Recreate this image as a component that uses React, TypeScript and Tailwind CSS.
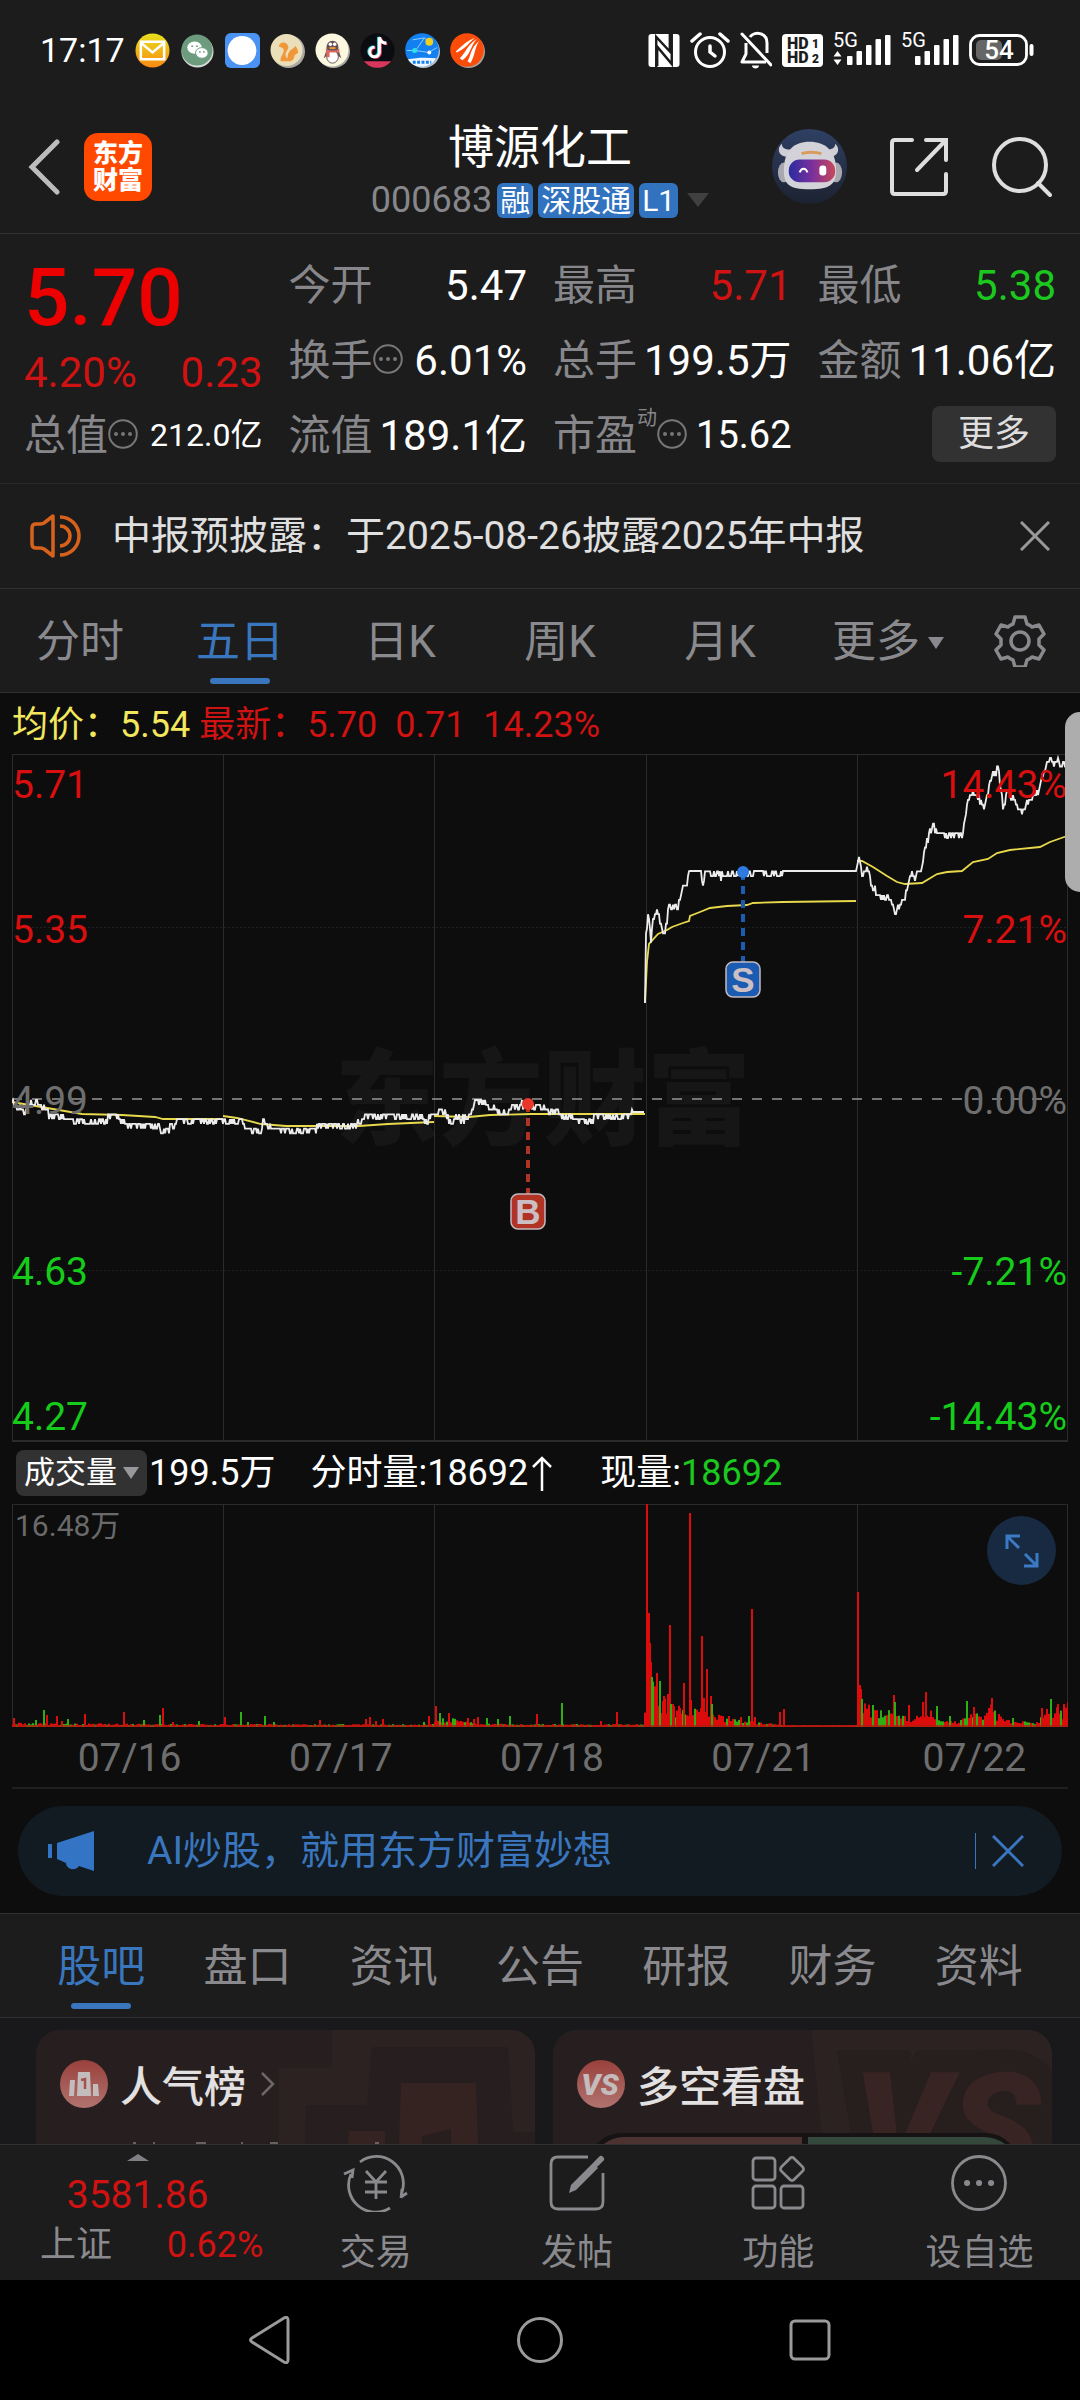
import type { ReactNode } from "react";

type Point = [number, number];
type Bar = { x: number; h: number; up: boolean };

const CHART_W = 1056;
const CHART_H = 686;
const VOLUME_H = 223;
const DAY_W = CHART_W / 5;
const TICK = CHART_H / 144; // one cent

const days = ["07/16", "07/17", "07/18", "07/21", "07/22"];

// Turning points of the price line, one list per unbroken run
const priceRuns: Point[][] = [
  [
    [0, 347], [10, 356], [19, 349], [29, 351], [39, 361], [53, 362], [64, 367], [94, 365], [104, 359],
    [115, 370], [143, 371], [151, 377], [170, 366], [211, 365], [227, 366], [233, 371], [241, 377],
    [249, 376], [252, 366], [257, 372], [270, 375], [302, 376], [308, 370], [343, 371], [353, 361],
    [410, 362], [415, 368], [421, 359], [427, 356], [433, 359], [437, 365], [457, 363], [463, 347],
    [472, 346], [478, 353], [496, 360], [500, 350], [527, 351], [533, 355], [547, 356], [551, 361],
    [576, 366], [588, 361], [612, 362], [620, 357], [632, 357],
  ],
  [
    [633, 248], [634, 184], [636, 159], [639, 184], [641, 161], [646, 156], [651, 180], [655, 168],
    [657, 146], [660, 153], [666, 150], [671, 132], [675, 130], [677, 116], [689, 116], [691, 134],
    [693, 117], [703, 119], [713, 122], [720, 118], [740, 119], [741, 116], [751, 116], [752, 118],
    [769, 119], [770, 116], [844, 116], [845, 110], [847, 104], [850, 119], [855, 114], [861, 132],
    [868, 141], [876, 142], [883, 158], [890, 144], [892, 147], [895, 131], [900, 118], [903, 123],
    [910, 112], [915, 85], [921, 70], [925, 78], [935, 80], [950, 79], [955, 53], [959, 38], [968, 46],
    [973, 53], [978, 26], [986, 13], [988, 30], [991, 52], [996, 35], [1003, 48], [1009, 57],
    [1015, 48], [1026, 37], [1035, 12], [1037, 3], [1043, 8], [1046, 4], [1050, 13], [1055, 7],
  ],
];

const averageRuns: Point[][] = [
  [[0, 347], [41, 354], [70, 359], [110, 360], [143, 362], [151, 364], [211, 364]],
  [[211, 361], [225, 363], [249, 369], [274, 371], [347, 371], [376, 369], [422, 367]],
  [[422, 361], [457, 362], [478, 360], [519, 359], [633, 359]],
  [
    [633, 248], [635, 207], [637, 189], [646, 179], [655, 175], [660, 172], [671, 168], [677, 166],
    [678, 161], [688, 157], [698, 153], [715, 151], [735, 150], [741, 148], [771, 147], [844, 146],
  ],
  [
    [845, 106], [850, 106], [861, 112], [875, 121], [885, 127], [893, 129], [910, 128], [925, 119],
    [935, 117], [950, 116], [961, 107], [976, 104], [985, 98], [998, 95], [1028, 92], [1038, 87],
    [1055, 81],
  ],
];

const volumeBase: Point[] = [
  [0, 4], [12, 3], [211, 2], [420, 2], [424, 8], [440, 8], [460, 4], [500, 2], [630, 2], [634, 55],
  [645, 38], [660, 25], [690, 21], [710, 10], [740, 5], [775, 1], [844, 1], [848, 32], [860, 20],
  [885, 19], [900, 8], [915, 21], [930, 9], [945, 5], [958, 20], [970, 7], [979, 24], [985, 13],
  [1000, 6], [1025, 4], [1035, 20], [1056, 19],
];

const upSpikes: Point[] = [
  [1, 9], [34, 12], [44, 11], [49, 6], [72, 13], [111, 15], [150, 19], [160, 5], [212, 10], [307, 7],
  [353, 8], [357, 10], [363, 6], [370, 8], [416, 11], [423, 21], [436, 14], [455, 9], [461, 8],
  [465, 10], [524, 13], [588, 6], [604, 15], [634, 223], [636, 114], [637, 84], [638, 65], [642, 38],
  [644, 54], [651, 31], [655, 33], [657, 102], [661, 21], [667, 19], [671, 44], [677, 214], [678, 27],
  [689, 91], [691, 29], [694, 58], [698, 31], [716, 11], [728, 10], [739, 118], [742, 10], [767, 15],
  [771, 18], [845, 135], [847, 42], [848, 38], [852, 20], [881, 32], [896, 22], [910, 25], [913, 35],
  [961, 20], [976, 19], [979, 29], [1029, 19], [1045, 23], [1051, 23], [1055, 25],
];

const downSpikes: Point[] = [
  [23, 7], [31, 17], [55, 8], [131, 7], [147, 12], [186, 6], [228, 15], [235, 5], [252, 11], [261, 5],
  [411, 5], [427, 14], [474, 9], [485, 8], [497, 11], [549, 24], [639, 50], [647, 46], [658, 23],
  [699, 23], [736, 11], [849, 28], [860, 22], [882, 25], [924, 21], [937, 11], [954, 26], [1000, 9],
  [1038, 28],
];

const seeded = (seed: number) => () => {
  seed = (seed * 16807) % 2147483647;
  return seed / 2147483647;
};

const valueAt = (points: Point[], x: number) => {
  for (let i = 1; i < points.length; i++) {
    const [x0, y0] = points[i - 1];
    const [x1, y1] = points[i];
    if (x <= x1) return { y: y0 + ((y1 - y0) * (x - x0)) / (x1 - x0), flat: y0 === y1 };
  }
  return { y: points[points.length - 1][1], flat: true };
};

const toPath = (points: Point[]) => "M" + points.map(([x, y]) => `${x} ${y.toFixed(1)}`).join("L");

const pricePath = priceRuns
  .map((run, i) => {
    const rand = seeded(71 + i);
    const out: Point[] = [run[0]];
    for (let x = run[0][0] + 1; x < run[run.length - 1][0]; x += 1) {
      const { y, flat } = valueAt(run, x);
      const noisy = flat ? y : y + (rand() - 0.5) * 7;
      out.push([x, flat ? y : Math.max(3, 2 + Math.round((noisy - 2) / TICK) * TICK)]);
    }
    out.push(run[run.length - 1]);
    return toPath(out);
  })
  .join("");

const averagePath = averageRuns.map(toPath).join("");

const volumeBars: Bar[] = (() => {
  const rand = seeded(19);
  const bars: Bar[] = [];
  for (let x = 0; x < CHART_W; x += 2) {
    const { y } = valueAt(volumeBase, x);
    const calm = x > 775 && x < 843;
    bars.push({ x, h: 1 + y * (0.35 + rand() * 0.65), up: calm || rand() > 0.3 });
  }
  upSpikes.forEach(([x, h]) => bars.push({ x, h, up: true }));
  downSpikes.forEach(([x, h]) => bars.push({ x, h, up: false }));
  return bars;
})();

const priceLabels = [
  { y: 43, price: "5.71", change: "14.43%", fill: "#d80f0f" },
  { y: 188, price: "5.35", change: "7.21%", fill: "#d80f0f" },
  { y: 359, price: "4.99", change: "0.00%", fill: "#6e6e6e" },
  { y: 530, price: "4.63", change: "-7.21%", fill: "#16cc1a" },
  { y: 675, price: "4.27", change: "-14.43%", fill: "#16cc1a" },
];

const MoreDots = () => (
  <svg viewBox="0 0 30 30" className="mb-1 size-[30px] shrink-0" fill="none" aria-hidden="true">
    <circle cx="15" cy="15" r="13.8" stroke="#77777a" strokeWidth="2" />
    <g fill="#77777a">
      <circle cx="8" cy="15" r="2" />
      <circle cx="15" cy="15" r="2" />
      <circle cx="22" cy="15" r="2" />
    </g>
  </svg>
);

const Signal = ({ data }: { data?: boolean }) => (
  <svg viewBox="0 -6 58 48" className="h-[48px] w-[58px]" fill="#fff" aria-hidden="true">
    <text x="0" y="15" fontSize="20" fontFamily="Roboto">
      5G
    </text>
    {data && <path d="M4.500 19l4 5.500h-8zM4.500 33l4-5.500h-8z" />}
    <rect x="14" y="24" width="5.500" height="9" rx="1" />
    <rect x="23.500" y="19" width="5.500" height="14" rx="1" />
    <rect x="33" y="13" width="5.500" height="20" rx="1" />
    <rect x="42.500" y="7" width="5.500" height="26" rx="1" />
    <rect x="52" y="3" width="5.500" height="30" rx="1" />
  </svg>
);

const AppIcon = ({ children }: { children: ReactNode }) => (
  <svg viewBox="0 0 36 36" className="size-[35px]" aria-hidden="true">
    {children}
  </svg>
);

const StatusBar = () => (
  <div className="flex items-center justify-between pt-[26px] pr-[46px] pb-[30px] pl-10">
    <div className="flex items-center gap-[10px]">
      <span className="text-[34px] leading-10 text-white">17:17</span>
      <AppIcon>
        <defs>
          <linearGradient id="mail" x1="0" y1="0" x2="0" y2="1">
            <stop offset="0" stopColor="#e6e01c" />
            <stop offset="1" stopColor="#fb8a12" />
          </linearGradient>
        </defs>
        <circle cx="18" cy="18" r="17.500" fill="url(#mail)" />
        <path d="M6 9h24v18H6zM6 10l12 10 12-10" fill="none" stroke="#fff" strokeWidth="2.600" />
      </AppIcon>
      <AppIcon>
        <circle cx="18" cy="19" r="16.500" fill="#d7ddd8" />
        <circle cx="17.500" cy="17.500" r="16" fill="#6c9c7d" />
        <ellipse cx="15" cy="15" rx="7.500" ry="6.300" fill="#fff" />
        <ellipse cx="22.500" cy="20.500" rx="6.500" ry="5.500" fill="#fff" stroke="#6c9c7d" />
        <g fill="#6c9c7d">
          <circle cx="12.500" cy="13.500" r="1" />
          <circle cx="17.500" cy="13.500" r="1" />
          <circle cx="20.500" cy="19.500" r=".9" />
          <circle cx="24.500" cy="19.500" r=".9" />
        </g>
      </AppIcon>
      <AppIcon>
        <rect width="36" height="36" rx="6" fill="#4b93f3" />
        <circle cx="17.500" cy="18" r="14.800" fill="#fff" />
      </AppIcon>
      <AppIcon>
        <circle cx="19" cy="19" r="17" fill="#aaa9a5" />
        <circle cx="17" cy="17.500" r="16.500" fill="#eadfb8" />
        <path
          d="M9 14c0-4 6-6 9-2 3 4-2 6-2 10 0 3 2 5 6 5v2H11c-1-5 4-8 3-12-1-2-3-2-5-3zM20 19c2-3 5-3 6-6l2 3 1 4c-2 2-4 2-4 4 0 3-2 5-5 5-3-3-2-7 0-10z"
          fill="#f0973a"
        />
      </AppIcon>
      <AppIcon>
        <circle cx="19" cy="19" r="17" fill="#aaa9a5" />
        <circle cx="17.500" cy="17.500" r="17" fill="#fbf8df" />
        <path d="M12 17c-2-12 14-12 12 0l3 9-4-3H13l-4 3z" fill="#6a5358" />
        <ellipse cx="18" cy="24.500" rx="6" ry="6.500" fill="#fff" stroke="#6a5358" />
        <circle cx="15.800" cy="11.500" r="1.800" fill="#fff" />
        <circle cx="20.200" cy="11.500" r="1.800" fill="#fff" />
        <path d="M11 16c4 3 10 3 14 0v4H15v5h-3z" fill="#dd6a62" />
        <path d="M15 15.500h6" stroke="#f0973a" strokeWidth="2" />
      </AppIcon>
      <AppIcon>
        <circle cx="18" cy="18" r="17.500" fill="#0b0b12" />
        <path d="M4 29h28c-7 9-21 9-28 0z" fill="#d9365e" />
        <path d="M14 14a5 5 0 1 0 5 5V4c1 4 4 6 8 6" fill="none" stroke="#25d8dc" strokeWidth="3" />
        <path d="M16 15a5 5 0 1 0 5 5V5c1 4 4 6 7 6" fill="none" stroke="#f03a5d" strokeWidth="3" />
        <path d="M15 14.500a5 5 0 1 0 5 5V4.500c1 4 4 6 7 6" fill="none" stroke="#fff" strokeWidth="3" />
      </AppIcon>
      <AppIcon>
        <circle cx="19" cy="19" r="17" fill="#b9c2cc" />
        <circle cx="17.500" cy="17.500" r="17.300" fill="#1380f2" />
        <path d="M2 18l9 0 13 2 9-5M11 18l9-13 5 5M8 7l12-2" fill="none" stroke="#8fd0ff" />
        <circle cx="25" cy="9" r="4" fill="#efcf1c" />
        <circle cx="10" cy="18" r="2.600" fill="#2fe0e8" />
        <circle cx="25" cy="20" r="2" fill="#fff" />
        <path d="M3 27c9-2 20-2 29-1-5 11-23 12-29 1z" fill="#eef6ff" />
        <path d="M8 30h19" stroke="#1380f2" strokeWidth="3" strokeDasharray="3 1.500" />
      </AppIcon>
      <AppIcon>
        <circle cx="19" cy="19" r="17" fill="#a7a3a0" />
        <circle cx="17.500" cy="17.500" r="17.300" fill="#fb4c0a" />
        <path
          d="M6 19C12 14 17 8 26 5c-7 5-9 11-19 15zM10 26c6-5 7-13 18-20-7 7-6 15-15 22zM18 29c4-6 2-12 12-21-5 8-4 15-9 23z"
          fill="#fff"
        />
      </AppIcon>
    </div>
    <div className="flex items-center gap-[10px]">
      <svg viewBox="0 0 32 34" className="h-[33px] w-[32px]" aria-hidden="true">
        <rect width="32" height="34" rx="3" fill="#fff" />
        <path d="M8 34V3l14 15V0M24 0v31L9 13v20" fill="none" stroke="#1c1c1c" strokeWidth="2.500" />
      </svg>
      <svg viewBox="0 0 40 38" className="h-[38px] w-[40px]" fill="none" stroke="#fff" aria-hidden="true">
        <circle cx="20" cy="21" r="14.500" strokeWidth="3" />
        <path d="M2 10l8-7M38 10l-8-7" strokeWidth="3.500" strokeLinecap="round" />
        <path d="M20 15v6l5 4" strokeWidth="3.500" strokeLinecap="round" />
      </svg>
      <svg viewBox="0 0 32 38" className="h-[38px] w-[32px]" fill="none" stroke="#fff" aria-hidden="true">
        <path d="M2 3l29 31" strokeWidth="3" strokeLinecap="round" />
        <path d="M6 12v11l-4 8h24M10 6c4-6 17-5 17 6v10" strokeWidth="3" strokeLinejoin="round" />
        <path d="M12 34.500h7c0 4-7 4-7 0z" fill="#fff" stroke="none" />
      </svg>
      <svg viewBox="0 0 41 33" className="h-[33px] w-[41px]" aria-hidden="true">
        <rect width="41" height="33" rx="4" fill="#fff" />
        <g fill="#1c1c1c" fontSize="16" fontWeight="900" fontFamily="Roboto">
          <text x="5" y="15">HD</text>
          <text x="5" y="29">HD</text>
          <g fontSize="12">
            <text x="30" y="14">1</text>
            <text x="30" y="29">2</text>
          </g>
        </g>
      </svg>
      <Signal data />
      <Signal />
      <svg viewBox="0 0 65 32" className="h-[32px] w-[65px]" aria-hidden="true">
        <rect x="1.500" y="1.500" width="56" height="29" rx="9" fill="none" stroke="#fff" strokeWidth="2.800" />
        <rect x="7" y="6" width="26" height="20" rx="5" fill="#666" />
        <rect x="60.500" y="10" width="4" height="12" rx="2" fill="#fff" />
        <text x="30" y="25" fontSize="26" fontWeight="500" fontFamily="Roboto" fill="#fff" textAnchor="middle">
          54
        </text>
      </svg>
    </div>
  </div>
);

const Header = () => (
  <header className="grid grid-cols-[1fr_auto_1fr] items-center border-b border-[#303030] px-[28px] pt-[9px] pb-[13px]">
    <div className="flex items-center gap-6">
      <button aria-label="返回">
        <svg viewBox="0 0 32 56" className="h-14 w-8" fill="none" stroke="#bcbcbc" strokeWidth="5">
          <path d="M29 3L4 28l25 25" strokeLinecap="round" />
        </svg>
      </button>
      <a
        href="#home"
        className="rounded-[14px] bg-[#ff4800] px-[9px] py-[7px] text-[25px] leading-[27px] font-black text-white"
      >
        东方
        <br />
        财富
      </a>
    </div>
    <div className="flex flex-col items-center gap-[5px] pt-[6px]">
      <h1 className="text-[46px] leading-[56px] text-white">博源化工</h1>
      <div className="flex items-center gap-[5px] text-[36px] leading-10 text-[#87878b]">
        <span>000683</span>
        <span className="rounded-md bg-[#3273bf] px-[3px] text-[30px] leading-[35px] text-white">融</span>
        <span className="rounded-md bg-[#3273bf] px-[3px] text-[30px] leading-[35px] text-white">深股通</span>
        <span className="rounded-md bg-[#3273bf] px-[3px] text-[30px] leading-[35px] text-white">L1</span>
        <svg viewBox="0 0 22 14" className="ml-1 h-[14px] w-[22px]" fill="#404040" aria-hidden="true">
          <path d="M0 0h22L11 14z" />
        </svg>
      </div>
    </div>
    <div className="flex items-center justify-end gap-[43px]">
      <button aria-label="妙想助手">
        <svg viewBox="0 0 76 76" className="size-[75px]">
          <defs>
            <linearGradient id="sky" x1="0" y1="0" x2="0" y2="1">
              <stop offset="0" stopColor="#2f4064" />
              <stop offset="1" stopColor="#1c2230" />
            </linearGradient>
            <linearGradient id="visor">
              <stop offset="0" stopColor="#2a2ca0" />
              <stop offset=".5" stopColor="#7a2f9c" />
              <stop offset="1" stopColor="#c8485a" />
            </linearGradient>
          </defs>
          <circle cx="38" cy="38" r="38" fill="url(#sky)" />
          <path d="M14 28c-8-1-9-9-4-13 0 5 4 6 10 6zM60 28c8-1 9-9 4-13 0 5-4 6-10 6z" fill="#cfced4" />
          <ellipse cx="12" cy="44" rx="6" ry="10" fill="#a9a8b0" />
          <ellipse cx="65" cy="44" rx="6" ry="10" fill="#a9a8b0" />
          <path d="M12 42c0-20 10-29 26-29s27 9 27 29c0 14-6 19-27 19s-26-5-26-19z" fill="#d3d2d8" />
          <rect x="17" y="31" width="47" height="23" rx="11" fill="url(#visor)" />
          <path d="M30 25c5-2 14-2 20 0" stroke="#d99a5c" strokeWidth="3" fill="none" />
          <path d="M28 44c2-5 6-5 8 0" stroke="#fff" strokeWidth="2" fill="none" />
          <rect x="48" y="37" width="7" height="10" rx="3" fill="#fff" />
        </svg>
      </button>
      <button aria-label="分享">
        <svg viewBox="0 0 59 60" className="h-[60px] w-[59px]" fill="none" stroke="#dedede" strokeWidth="4">
          <path d="M22 3H5q-3 0-3 3v48q0 3 3 3h48q3 0 3-3V37M36 3h20v20M55 4L27 33" strokeLinecap="round" />
        </svg>
      </button>
      <button aria-label="搜索">
        <svg viewBox="0 0 60 60" className="size-[60px]" fill="none" stroke="#dedede" strokeWidth="4">
          <circle cx="28" cy="28" r="26" />
          <path d="M46 46l12 12" strokeLinecap="round" />
        </svg>
      </button>
    </div>
  </header>
);

type StatProps = { label: string; value: string; dots?: boolean; sup?: string; color?: string; size?: string };

const Stat = ({ label, value, dots, sup, color = "text-white", size = "text-[42px]" }: StatProps) => (
  <div className="flex items-center justify-between leading-[75px] whitespace-nowrap">
    <dt className="flex items-center text-[42px] text-[#87878b]">
      {label}
      {sup && <span className="mb-9 text-[20px] leading-6">{sup}</span>}
      {dots && <MoreDots />}
    </dt>
    <dd className={`${size} ${color}`}>{value}</dd>
  </div>
);

const Quote = () => (
  <section className="grid grid-cols-4 gap-x-[26px] border-b border-[#282828] pt-[14px] pr-[24px] pb-[10px] pl-[24px]">
    <div>
      <div className="text-[80px] leading-[100px] font-medium text-[#ec0000]">5.70</div>
      <div className="flex justify-between text-[42px] leading-[50px] text-[#d01212]">
        <span>4.20%</span>
        <span>0.23</span>
      </div>
      <dl>
        <Stat label="总值" value="212.0亿" dots size="text-[32px]" />
      </dl>
    </div>
    <dl>
      <Stat label="今开" value="5.47" />
      <Stat label="换手" value="6.01%" dots />
      <Stat label="流值" value="189.1亿" />
    </dl>
    <dl>
      <Stat label="最高" value="5.71" color="text-[#d01212]" />
      <Stat label="总手" value="199.5万" />
      <Stat label="市盈" value="15.62" sup="动" dots size="text-[38px]" />
    </dl>
    <div className="flex flex-col">
      <dl>
        <Stat label="最低" value="5.38" color="text-[#1bc81e]" />
        <Stat label="金额" value="11.06亿" />
      </dl>
      <button className="mt-2 self-end rounded-lg bg-[#323232] px-[26px] text-[36px] leading-[56px] text-[#dedede]">
        更多
      </button>
    </div>
  </section>
);

const Notice = () => (
  <div className="flex items-center border-b border-[#303030] px-[30px] py-6">
    <svg viewBox="0 0 52 44" className="h-11 w-[52px]" fill="none" stroke="#d8621c" strokeWidth="3.500" aria-hidden="true">
      <path d="M23 2v40l-9-7q-2-1-4-1H6q-4 0-4-4V14q0-4 4-4h4q2 0 4-1z" strokeLinejoin="round" />
      <path d="M30 12a10 10 0 0 1 0 20M30 3a19 19 0 0 1 0 38" />
    </svg>
    <a href="#notice" className="ml-[30px] flex-1 text-[39px] leading-14 text-[#e0e0e0]">
      中报预披露：于2025-08-26披露2025年中报
    </a>
    <button aria-label="关闭公告">
      <svg viewBox="0 0 30 30" className="size-[30px]" stroke="#9a9a9a" strokeWidth="3">
        <path d="M1 1l28 28M29 1L1 29" />
      </svg>
    </button>
  </div>
);

const periods = ["分时", "五日", "日K", "周K", "月K"];

const PeriodTabs = () => (
  <nav className="grid grid-cols-[repeat(6,4fr)_3fr] border-b border-[#303030] text-[44px] leading-[99px] text-[#8a8a8e]">
    {periods.map((name) => (
      <button key={name} className={`relative pt-1 ${name === "五日" ? "text-[#3a76bd]" : ""}`}>
        {name}
        {name === "五日" && (
          <span className="absolute bottom-2 left-1/2 h-[6px] w-[60px] -translate-x-1/2 rounded-full bg-[#3a76bd]" />
        )}
      </button>
    ))}
    <button className="flex items-center justify-center gap-2 pt-1 pl-4">
      更多
      <svg viewBox="0 0 16 12" className="h-3 w-4" fill="#8a8a8e" aria-hidden="true">
        <path d="M0 0h16L8 12z" />
      </svg>
    </button>
    <button aria-label="设置" className="flex items-center justify-center">
      <svg viewBox="0 0 52 52" className="size-[52px]" fill="none" stroke="#8a8a8e" strokeWidth="3.500">
        <path
          d="M21 2h10l2 7q3 1 5 3l7-2 5 9-5 5v6l5 5-5 9-7-2q-2 2-5 3l-2 7H21l-2-7q-3-1-5-3l-7 2-5-9 5-5v-6l-5-5 5-9 7 2q2-2 5-3z"
          strokeLinejoin="round"
        />
        <circle cx="26" cy="26" r="9" />
      </svg>
    </button>
  </nav>
);

const Marker = ({ x, y, boxY, letter, dot, fill }: { x: number; y: number; boxY: number; letter: string; dot: string; fill: string }) => (
  <g>
    <path d={`M${x} ${y}V${boxY}`} stroke={fill} strokeWidth="4" strokeDasharray="8 6" />
    <circle cx={x} cy={y} r="6" fill={dot} />
    <rect x={x - 17} y={boxY} width="34" height="35" rx="7" fill={fill} stroke="#c3b9be" strokeWidth="1.500" />
    <text x={x} y={boxY + 30} fontSize="35" fontWeight="700" fill="#cbbfc4" textAnchor="middle" fontFamily="Liberation Sans">
      {letter}
    </text>
  </g>
);

const PriceChart = () => (
  <svg viewBox={`0 0 ${CHART_W} ${CHART_H + 1}`} className="block w-full" role="img" aria-label="五日走势">
    <text
      x={CHART_W / 2 + 3}
      y="382"
      fontSize="104"
      fontWeight="900"
      fill="#161616"
      textAnchor="middle"
      fontFamily="Noto Sans CJK SC"
    >
      东方财富
    </text>
    <g stroke="#2b2b2b">
      {[0, 1, 2, 3, 4, 5].map((i) => (
        <path key={i} d={`M${Math.min(CHART_W - 0.5, Math.round(i * DAY_W) + 0.5)} 0V${CHART_H}`} />
      ))}
      <path d={`M0 ${CHART_H}H${CHART_W}`} strokeWidth="2" />
      <path d={`M0 172.500H${CHART_W}M0 515.500H${CHART_W}`} stroke="#202020" strokeDasharray="2 2" />
    </g>
    <path d={`M0 344H${CHART_W}`} stroke="#969696" strokeWidth="1.600" strokeDasharray="10 10" />
    <path d={averagePath} fill="none" stroke="#e8d94c" strokeWidth="1.800" />
    <path d={pricePath} fill="none" stroke="#ececec" strokeWidth="1.800" />
    <g fontSize="39" fontFamily="Roboto">
      {priceLabels.map((label) => (
        <g key={label.price} fill={label.fill}>
          <text x="0" y={label.y}>
            {label.price}
          </text>
          <text x={CHART_W - 1} y={label.y} textAnchor="end">
            {label.change}
          </text>
        </g>
      ))}
    </g>
    <Marker x={516} y={349} boxY={439} letter="B" dot="#e8382c" fill="#b13325" />
    <Marker x={731} y={117} boxY={207} letter="S" dot="#2f7ae0" fill="#1b5bb2" />
  </svg>
);

const VolumeChart = () => (
  <svg viewBox={`0 0 ${CHART_W} ${VOLUME_H}`} className="block w-full" role="img" aria-label="成交量">
    <g stroke="#2b2b2b">
      <path d={`M0 .5H${CHART_W}`} />
      {[0, 1, 2, 3, 4, 5].map((i) => (
        <path key={i} d={`M${Math.min(CHART_W - 0.5, Math.round(i * DAY_W) + 0.5)} 0V${VOLUME_H}`} />
      ))}
    </g>
    {volumeBars.map((bar, i) => (
      <rect
        key={i}
        x={bar.x}
        y={VOLUME_H - bar.h}
        width="2"
        height={bar.h}
        fill={bar.up ? "#dc0c0c" : "#2fae14"}
      />
    ))}
    <path d={`M0 ${VOLUME_H - 1}H${CHART_W}`} stroke="#b01c10" strokeWidth="1.500" />
    <text x="3" y="32" fontSize="30" fill="#6a6a6a" fontFamily="Roboto, Noto Sans CJK SC">
      16.48万
    </text>
  </svg>
);

const Charts = () => (
  <section className="relative bg-[#0d0d0d] px-3">
    <div className="absolute -top-px right-0 mt-5 h-[180px] w-[15px] rounded-l-[18px] bg-[#adadad]" />
    <p className="border-b border-[#2b2b2b] pt-[3px] text-[36px] leading-[58px] whitespace-pre text-[#d01212]">
      <span className="text-[#f3e75e]">均价：5.54</span> 最新：5.70{"  "}0.71{"  "}14.23%
    </p>
    <PriceChart />
    <div className="flex items-center py-2 text-[36px] leading-[46px] text-white">
      <button className="ml-1 flex items-center gap-[6px] rounded-lg bg-[#323232] px-[8px] text-[31px] leading-[46px]">
        成交量
        <svg viewBox="0 0 16 12" className="h-3 w-4" fill="#98989c" aria-hidden="true">
          <path d="M0 0h16L8 12z" />
        </svg>
      </button>
      <span className="ml-[2px]">199.5万</span>
      <span className="ml-[35px]">分时量:18692</span>
      <svg viewBox="0 0 26 36" className="h-9 w-[26px]" fill="none" stroke="#fff" strokeWidth="2.500" aria-hidden="true">
        <path d="M14 36V3M5 12l9-9 9 9" />
      </svg>
      <span className="ml-[46px]">
        现量:<span className="text-[#1bc81e]">18692</span>
      </span>
    </div>
    <div className="relative">
      <VolumeChart />
      <button
        aria-label="全屏"
        className="absolute top-3 right-3 flex size-[69px] items-center justify-center rounded-full bg-[#172a41]"
      >
        <svg viewBox="0 0 34 34" className="size-[34px]" fill="none" stroke="#3b7ac4" strokeWidth="3">
          <path d="M2 15V2h13M2 2l12 12M32 19v13H19M32 32L20 20" />
        </svg>
      </button>
    </div>
    <div className="grid grid-cols-5 border-b-2 border-[#202020] pt-[2px] text-center text-[39px] leading-[58px] text-[#6e6e6e]">
      {days.map((day) => (
        <span key={day} className="pl-6">
          {day}
        </span>
      ))}
    </div>
    <div className="flex px-[6px] py-[17px]">
      <div className="flex flex-1 items-center rounded-full bg-[#121a22] py-4 pr-[38px] pl-[30px] text-[#3a76bd]">
        <svg viewBox="0 0 46 40" className="h-10 w-[46px]" fill="#3375c4" aria-hidden="true">
          <path d="M0 13h4v14H0zM9 12L46 0v40l-15-5q-3 4-8 3-5-2-5-6l-9-4z" />
        </svg>
        <a href="#ai" className="ml-[53px] flex-1 text-[39px] leading-[58px]">
          AI炒股，就用东方财富妙想
        </a>
        <span className="mr-4 h-9 w-px bg-[#3a76bd]" />
        <button aria-label="关闭推广">
          <svg viewBox="0 0 32 32" className="size-8" stroke="#3a76bd" strokeWidth="3">
            <path d="M1 1l30 30M31 1L1 31" />
          </svg>
        </button>
      </div>
    </div>
  </section>
);

const sections = ["股吧", "盘口", "资讯", "公告", "研报", "财务", "资料"];

const SectionTabs = () => (
  <nav className="grid grid-cols-7 border-y border-[#303030] px-7 text-[44px] leading-[99px] text-[#8a8a8e]">
    {sections.map((name) => (
      <button key={name} className={`relative pt-1 ${name === "股吧" ? "text-[#3a76bd]" : ""}`}>
        {name}
        {name === "股吧" && (
          <span className="absolute bottom-2 left-1/2 h-[6px] w-[60px] -translate-x-1/2 rounded-full bg-[#3a76bd]" />
        )}
      </button>
    ))}
  </nav>
);

const Cards = () => (
  <section className="grid h-[126px] grid-cols-2 gap-[18px] overflow-hidden bg-[#19191b] pt-3 pr-7 pl-9 text-[42px] leading-[52px] font-medium text-[#e2e0e0]">
    <div className="relative h-[200px] overflow-hidden rounded-3xl bg-[#271f1f]">
      <svg viewBox="0 0 499 114" className="absolute top-0 right-0 h-[114px]" aria-hidden="true">
        <path d="M296 0h203v102h-22l-5-85H336l-5 58h-61l-1 39h-26V38h53z" fill="#2b2221" />
        <path d="M365 53h75l2 61h-79zM313 101h36v13h-37z" fill="#352322" />
        <path d="M386 106l29-7v15h-29z" fill="#281e1e" />
        <path d="M97 113h3M117 113h2M160 113h10M205 113h2M234 113h8M339 113h4" stroke="#a8a4a4" />
      </svg>
      <a href="#rank" className="relative flex items-center px-6 pt-[28px]">
        <svg viewBox="0 0 48 48" className="mb-1 size-12" aria-hidden="true">
          <defs>
            <linearGradient id="badge" x1="0" y1="0" x2="0" y2="1">
              <stop offset="0" stopColor="#99403c" />
              <stop offset="1" stopColor="#b0736f" />
            </linearGradient>
          </defs>
          <circle cx="24" cy="24" r="24" fill="url(#badge)" />
          <path d="M10 20h5l-1 16H9zM18 12h12l1 24H17zM33 24h5l1 12h-6z" fill="#c4bcbc" />
          <path d="M21 20l4-1v10" fill="none" stroke="#a4504c" strokeWidth="2.500" />
        </svg>
        <span className="ml-3 pt-1">人气榜</span>
        <svg viewBox="0 0 14 24" className="mb-1 ml-[15px] h-6 w-[14px]" fill="none" stroke="#6d6767" strokeWidth="2.500" aria-hidden="true">
          <path d="M1 1l11 11L1 23" />
        </svg>
      </a>
    </div>
    <div className="relative h-[200px] overflow-hidden rounded-3xl bg-[#271f1f]">
      <svg viewBox="0 0 499 114" className="absolute top-0 right-0 h-[114px]" aria-hidden="true">
        <path d="M258 0h241v114H270z" fill="#2b2221" />
        <text
          x="300"
          y="149"
          fontSize="150"
          fontWeight="900"
          fontStyle="italic"
          fontFamily="Roboto"
          fill="#382422"
          stroke="#271e1e"
          strokeWidth="44"
          paintOrder="stroke"
        >
          VS
        </text>
        <path d="M40 118q12-15 28-15h365q16 0 28 15z" fill="#171314" />
        <path d="M46 118q12-11 24-11h179v11z" fill="#4c3331" />
        <path d="M255 107h176q14 0 26 11H255z" fill="#34493c" />
      </svg>
      <a href="#poll" className="relative flex items-center px-6 pt-[28px]">
        <svg viewBox="0 0 48 48" className="mb-1 size-12" aria-hidden="true">
          <circle cx="24" cy="24" r="24" fill="url(#badge)" />
          <text
            x="23"
            y="35"
            fontSize="30"
            fontWeight="900"
            fontStyle="italic"
            fontFamily="Roboto"
            fill="#c4bcbc"
            textAnchor="middle"
          >
            VS
          </text>
        </svg>
        <span className="ml-3 pt-1">多空看盘</span>
      </a>
    </div>
  </section>
);

const actions = [
  {
    label: "交易",
    icon: (
      <>
        <path d="M17 8a27 27 0 0 1 42 30l-1 5M58 44l1-9M58 43l6-4M47 54A27 27 0 0 1 8 20M1 20l9-4-1 8" />
        <path d="M23 17l10 11 10-11M22 28h22M22 38h22M33 28v17" />
      </>
    ),
  },
  {
    label: "发帖",
    icon: (
      <>
        <path d="M44 3H14q-7 0-7 7v38q0 7 7 7h38q7 0 7-7V19" />
        <path d="M25 39l2-8 22-22 5 5-22 22z" fill="#8a8a8e" stroke="none" />
        <path d="M52 10l5-5" strokeWidth="6" strokeLinecap="round" />
      </>
    ),
  },
  {
    label: "功能",
    icon: (
      <>
        <rect x="8" y="4" width="22" height="22" rx="3" />
        <rect x="8" y="32" width="22" height="22" rx="3" />
        <rect x="36" y="32" width="22" height="22" rx="3" />
        <rect x="38" y="6" width="18" height="18" rx="3" transform="rotate(45 47 15)" />
      </>
    ),
  },
  {
    label: "设自选",
    icon: (
      <>
        <circle cx="33" cy="29" r="26.500" />
        <path d="M21 29h.1M33 29h.1M45 29h.1" strokeWidth="6" strokeLinecap="round" />
      </>
    ),
  },
];

const BottomBar = () => (
  <nav className="flex border-t border-[#303030] text-[36px] text-[#8a8a8e]">
    <button className="flex flex-[275] flex-col items-center pt-[9px]">
      <svg viewBox="0 0 22 7" className="h-[7px] w-[22px]" fill="#808084" aria-hidden="true">
        <path d="M0 7L11 0l11 7z" />
      </svg>
      <span className="mt-[10px] text-[39px] leading-12 text-[#d01212]">3581.86</span>
      <span className="flex w-full justify-between pt-[2px] pr-3 pl-10 leading-12">
        上证 <span className="text-[#d01212]">0.62%</span>
      </span>
    </button>
    {actions.map((action) => (
      <button key={action.label} className="flex flex-[201] flex-col items-center pt-[9px] pb-[5px]">
        <svg viewBox="0 0 66 58" className="h-[58px] w-[66px]" fill="none" stroke="#8a8a8e" strokeWidth="2.800" aria-hidden="true">
          {action.icon}
        </svg>
        <span className="mt-[19px] leading-11">{action.label}</span>
      </button>
    ))}
  </nav>
);

const SystemNav = () => (
  <div className="grid grid-cols-3 justify-items-center bg-black px-[135px] py-9">
    <button aria-label="系统返回">
      <svg viewBox="0 0 48 48" className="size-12" fill="none" stroke="#9a9a9a" strokeWidth="3">
        <path d="M38 2q4-2 4 2v40q0 4-4 2L6 26q-3-2 0-4z" />
      </svg>
    </button>
    <button aria-label="主屏幕">
      <svg viewBox="0 0 48 48" className="size-12" fill="none" stroke="#9a9a9a" strokeWidth="3">
        <circle cx="24" cy="24" r="21.500" />
      </svg>
    </button>
    <button aria-label="最近任务">
      <svg viewBox="0 0 48 48" className="size-12" fill="none" stroke="#9a9a9a" strokeWidth="3">
        <rect x="5" y="5" width="38" height="38" rx="4" />
      </svg>
    </button>
  </div>
);

const App = () => (
  <div className="min-h-screen bg-[#1c1c1c] font-[Roboto,'Noto_Sans_CJK_SC',sans-serif]">
    <StatusBar />
    <Header />
    <main>
      <Quote />
      <Notice />
      <PeriodTabs />
      <Charts />
      <SectionTabs />
      <Cards />
    </main>
    <BottomBar />
    <SystemNav />
  </div>
);

export default App;
